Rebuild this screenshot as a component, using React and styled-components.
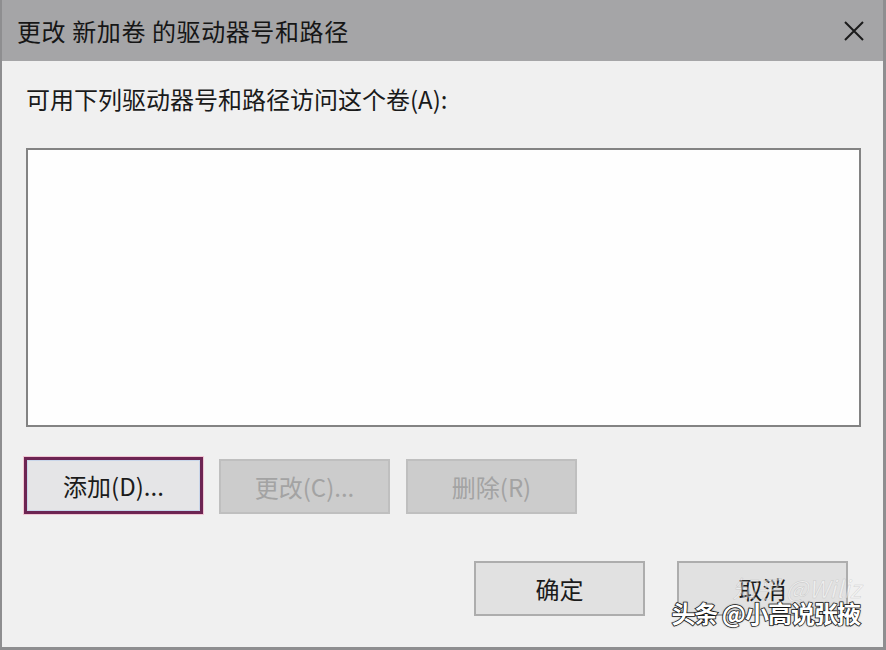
import styled, { createGlobalStyle } from "styled-components";

const GlobalStyle = createGlobalStyle`
  html, body {
    margin: 0;
    padding: 0;
    background: #f0f0f0;
  }
  body {
    font-family: "Noto Sans CJK SC", "Microsoft YaHei", sans-serif;
  }
`;

const Window = styled.div`
  position: relative;
  width: 886px;
  height: 650px;
  box-sizing: border-box;
  border-left: 2px solid #8e8e90;
  border-right: 3px solid #8e8e90;
  border-bottom: 3px solid #8e8e90;
  background: #f0f0f0;
  display: flex;
  flex-direction: column;
  overflow: hidden;
`;

const TitleBar = styled.div`
  height: 61px;
  flex: 0 0 61px;
  background: #a5a5a7;
  display: flex;
  align-items: center;
  justify-content: space-between;
  padding: 0 18px 0 15px;
  color: #161616;
  font-size: 24px;
  letter-spacing: 0.6px;
`;

const Body = styled.div`
  flex: 1;
  display: flex;
  flex-direction: column;
  padding: 26px 22px 0 24px;
`;

const Label = styled.div`
  font-size: 24px;
  line-height: 24px;
  color: #1a1a1a;
  margin-bottom: 37px;
`;

const ListBox = styled.div`
  height: 279px;
  box-sizing: border-box;
  border: 2px solid #838383;
  background: #fefefe;
`;

const Row = styled.div`
  display: flex;
  justify-content: ${(p) => (p.$end ? "flex-end" : "flex-start")};
  gap: ${(p) => p.$gap}px;
  margin-top: ${(p) => p.$top}px;
  padding-right: ${(p) => (p.$end ? 13 : 0)}px;
`;

const Button = styled.div`
  width: ${(p) => p.$w || 171}px;
  height: 55px;
  box-sizing: border-box;
  display: flex;
  align-items: center;
  justify-content: center;
  font-size: 24px;
  border: 2px solid #adadad;
  background: #e1e1e1;
  color: #1b1b1b;
`;

const FocusButton = styled(Button)`
  border: 3px solid #6d2553;
  box-shadow: 0 0 0 1px #f1c6d4, inset 0 0 0 1px #c9d6ea;
  background: #e5e5e7;
  height: 57px;
  margin-top: -2px;
  margin-left: -2px;
`;

const DisabledButton = styled(Button)`
  background: #cccccc;
  border-color: #bfbfbf;
  color: #a3a3a3;
`;

const Watermark = styled.div`
  position: absolute;
  right: 23px;
  bottom: 17px;
  font-size: 24px;
  font-weight: 700;
  color: #ffffff;
  letter-spacing: -1px;
  -webkit-text-stroke: 1.5px #1e1e1e;
  paint-order: stroke fill;
  text-shadow: 0 0 2px #000;
`;

const FaintMark = styled.div`
  position: absolute;
  right: 22px;
  bottom: 42px;
  font-size: 24px;
  font-style: italic;
  color: rgba(255, 255, 255, 0.45);
  -webkit-text-stroke: 0.5px rgba(140, 140, 140, 0.35);
`;

const CloseIcon = () => (
  <svg width="22" height="22" viewBox="0 0 22 22">
    <path d="M2 2 L20 20 M20 2 L2 20" stroke="#1b1b1b" strokeWidth="2" fill="none" />
  </svg>
);

const App = () => {
  return (
    <>
      <GlobalStyle />
      <Window>
        <TitleBar>
          <span>更改 新加卷 的驱动器号和路径</span>
          <CloseIcon />
        </TitleBar>
        <Body>
          <Label>可用下列驱动器号和路径访问这个卷(A):</Label>
          <ListBox />
          <Row $gap={16} $top={32}>
            <FocusButton $w={179}>添加(D)...</FocusButton>
            <DisabledButton>更改(C)...</DisabledButton>
            <DisabledButton>删除(R)</DisabledButton>
          </Row>
          <Row $end $gap={32} $top={47}>
            <Button>确定</Button>
            <Button>取消</Button>
          </Row>
        </Body>
        <FaintMark>知乎 @Wiliz</FaintMark>
        <Watermark>头条 @小高说张掖</Watermark>
      </Window>
    </>
  );
};

export default App;
